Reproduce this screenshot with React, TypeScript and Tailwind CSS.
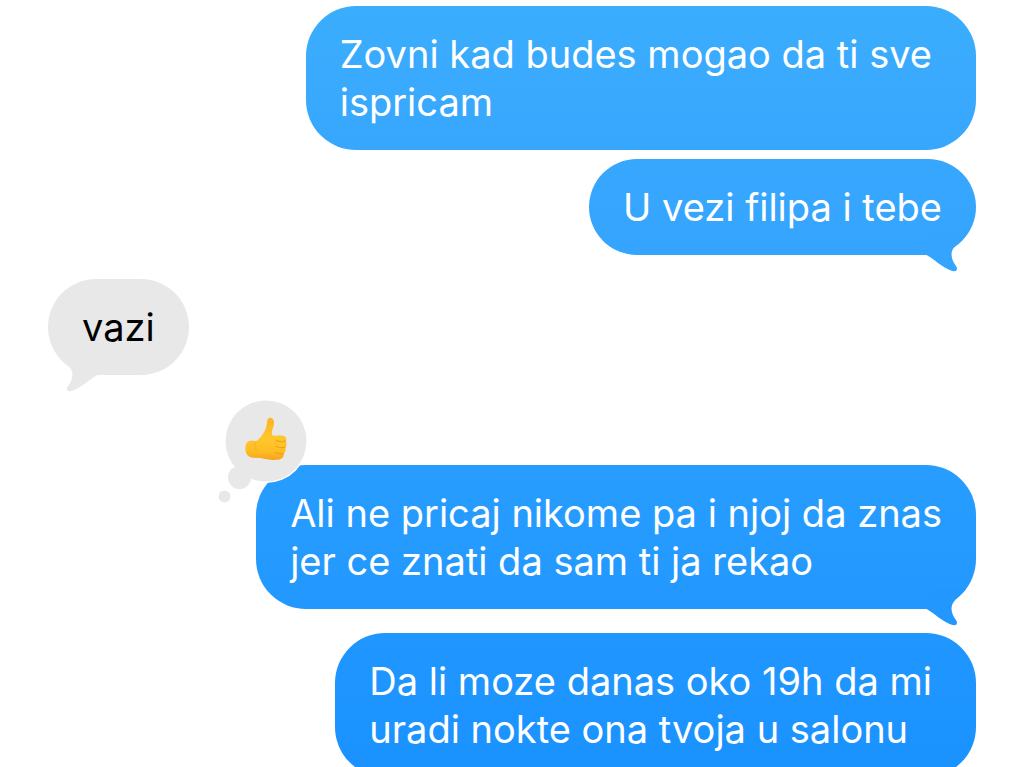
type Message = {
  id: number;
  lines: string[];
  sent: boolean;
  tail: boolean;
  fill: string;
  tailColor: string;
  spacing: string;
  liked?: boolean;
};

const messages: Message[] = [
  {
    id: 1,
    lines: ['Zovni kad budes mogao da ti sve', 'ispricam'],
    sent: true,
    tail: false,
    fill: 'bg-linear-to-b from-[#3badfd] to-[#37a7fe] text-white',
    tailColor: 'text-[#37a7fe]',
    spacing: '',
  },
  {
    id: 2,
    lines: ['U vezi filipa i tebe'],
    sent: true,
    tail: true,
    fill: 'bg-linear-to-b from-[#37a7fe] to-[#34a4fe] text-white',
    tailColor: 'text-[#34a4fe]',
    spacing: 'mt-[9px]',
  },
  {
    id: 3,
    lines: ['vazi'],
    sent: false,
    tail: true,
    fill: 'bg-[#e8e8e8] text-black',
    tailColor: 'text-[#e8e8e8]',
    spacing: 'mt-6',
  },
  {
    id: 4,
    lines: ['Ali ne pricaj nikome pa i njoj da znas', 'jer ce znati da sam ti ja rekao'],
    sent: true,
    tail: true,
    fill: 'bg-linear-to-b from-[#289dff] to-[#2298ff] text-white',
    tailColor: 'text-[#2298ff]',
    spacing: 'mt-[90px]',
    liked: true,
  },
  {
    id: 5,
    lines: ['Da li moze danas oko 19h da mi', 'uradi nokte ona tvoja u salonu'],
    sent: true,
    tail: false,
    fill: 'bg-linear-to-b from-[#2097ff] to-[#1a92ff] text-white',
    tailColor: 'text-[#1a92ff]',
    spacing: 'mt-6',
  },
];

function Tail({ sent, color }: { sent: boolean; color: string }) {
  return (
    <svg
      viewBox="0 0 60 60"
      aria-hidden="true"
      className={`absolute -bottom-5 size-[60px] ${color} ${sent ? 'right-0' : 'left-0 -scale-x-100'}`}
    >
      <path
        fill="currentColor"
        d="M10 40C15 41 27 54 37 56C41 57 42 54 40 51C36 46 34 39 37 34C40 29 46 26 50 20L20 20L8 40Z"
      />
    </svg>
  );
}

function Tapback() {
  return (
    <svg
      viewBox="0 0 92 108"
      role="img"
      aria-label="Liked"
      className="absolute -top-[67px] -left-10 h-[108px] w-[92px]"
    >
      <defs>
        <linearGradient id="skin" x1="0" y1="0" x2="0" y2="1">
          <stop offset="0" stopColor="#fbb624" />
          <stop offset="0.5" stopColor="#ffc62c" />
          <stop offset="0.8" stopColor="#ffbd24" />
          <stop offset="1" stopColor="#f9a21c" />
        </linearGradient>
      </defs>
      <circle cx="50" cy="43" r="42" fill="#fff" />
      <g fill="#e8e8e8">
        <circle cx="50" cy="43" r="40.5" />
        <circle cx="23.5" cy="79.5" r="11.5" />
        <circle cx="8.5" cy="98.5" r="6" />
      </g>
      <g transform="translate(22.5 13.5) scale(0.345)">
        <path
          fill="url(#skin)"
          d="M84 24C86 16 96 16 101 23C106 32 101 45 98 54C96 60 96 64 98 69C106 72 118 69 128 70C138 71 141 79 137 85C141 92 140 99 136 103C138 111 137 117 131 121C133 130 127 137 118 139C101 142 82 140 65 135C51 134 38 136 29 130C19 122 18 104 22 94C27 83 39 82 50 86C61 80 71 66 77 54C83 43 81 34 84 24Z"
        />
        <g fill="none" stroke="#e28c0c" strokeWidth="3" strokeLinecap="round" opacity="0.6">
          <path d="M110 84C119 88 130 88 137 85" />
          <path d="M108 101C117 105 128 106 136 103" />
          <path d="M107 119C115 123 124 124 131 121" />
          <path d="M50 87C45 93 45 104 52 112" opacity="0.5" />
        </g>
      </g>
    </svg>
  );
}

function Bubble({ message }: { message: Message }) {
  return (
    <li className={`flex ${message.sent ? 'justify-end' : 'justify-start'} ${message.spacing}`}>
      <div
        className={`relative rounded-[50px] py-6 pl-[34px] ${message.tail ? 'pr-[34px]' : 'pr-11'} ${message.fill}`}
      >
        {message.tail && <Tail sent={message.sent} color={message.tailColor} />}
        {message.liked && <Tapback />}
        <p className="relative text-[38px] leading-[48px] whitespace-pre">{message.lines.join('\n')}</p>
      </div>
    </li>
  );
}

export default function App() {
  return (
    <main className="h-screen overflow-hidden bg-white font-['Inter',sans-serif]">
      <ul className="flex flex-col px-12 pt-[6px]">
        {messages.map(message => (
          <Bubble key={message.id} message={message} />
        ))}
      </ul>
    </main>
  );
}
